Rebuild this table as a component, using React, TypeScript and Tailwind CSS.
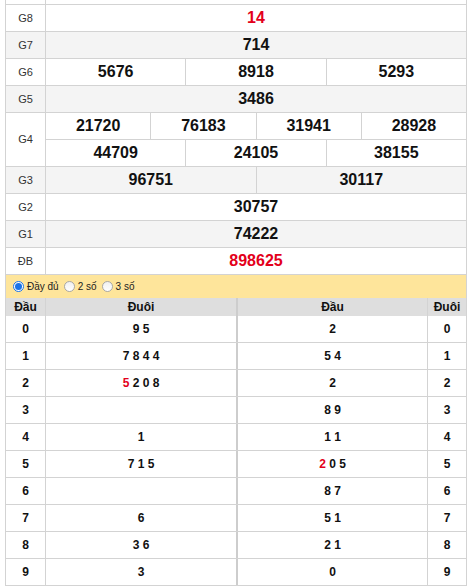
import React from 'react';

type Prize = {
  label: string;
  lines: string[][];
  red?: boolean;
};

const prizes: Prize[] = [
  { label: 'G8', lines: [['14']], red: true },
  { label: 'G7', lines: [['714']] },
  { label: 'G6', lines: [['5676', '8918', '5293']] },
  { label: 'G5', lines: [['3486']] },
  {
    label: 'G4',
    lines: [
      ['21720', '76183', '31941', '28928'],
      ['44709', '24105', '38155'],
    ],
  },
  { label: 'G3', lines: [['96751', '30117']] },
  { label: 'G2', lines: [['30757']] },
  { label: 'G1', lines: [['74222']] },
  { label: 'ĐB', lines: [['898625']], red: true },
];

// đầu - đuôi, chữ số đỏ đánh dấu bằng *
const loto: { n: string; tail: string; head: string }[] = [
  { n: '0', tail: '9 5', head: '2' },
  { n: '1', tail: '7 8 4 4', head: '5 4' },
  { n: '2', tail: '*5 2 0 8', head: '2' },
  { n: '3', tail: '', head: '8 9' },
  { n: '4', tail: '1', head: '1 1' },
  { n: '5', tail: '7 1 5', head: '*2 0 5' },
  { n: '6', tail: '', head: '8 7' },
  { n: '7', tail: '6', head: '5 1' },
  { n: '8', tail: '3 6', head: '2 1' },
  { n: '9', tail: '3', head: '0' },
];

const Digits = ({ text }: { text: string }) => {
  if (text.startsWith('*')) {
    const [first, ...rest] = text.slice(1).split(' ');
    return (
      <span>
        <span className="text-[#e3001b]">{first}</span>
        {rest.length > 0 && ' ' + rest.join(' ')}
      </span>
    );
  }
  return <span>{text}</span>;
};

const Radio = ({ checked, label }: { checked?: boolean; label: string }) => (
  <label className="flex items-center gap-[3px]">
    {checked ? (
      <span className="flex h-[11px] w-[11px] items-center justify-center rounded-full border border-[#1a73e8] bg-white">
        <span className="h-[7px] w-[7px] rounded-full bg-[#1a73e8]" />
      </span>
    ) : (
      <span className="h-[11px] w-[11px] rounded-full border border-[#a8a8a8] bg-gradient-to-b from-[#f0f0f0] to-white" />
    )}
    <span>{label}</span>
  </label>
);

const App = () => {
  return (
    <div
      className="h-[587px] w-[473px] overflow-hidden bg-white text-[#222]"
      style={{ fontFamily: '"Liberation Sans", Arial, sans-serif' }}
    >
      <div className="ml-[5px] w-[462px] border-x border-[#d3d3d3]">
        {/* phần trên bị cắt */}
        <div className="flex h-[5px] border-b border-[#d3d3d3]">
          <div className="w-[40px] border-r border-[#d3d3d3]" />
          <div className="flex-1" />
        </div>

        {prizes.map((p, i) => (
          <div
            key={p.label}
            className={`flex border-b border-[#d3d3d3] ${i % 2 === 1 ? 'bg-[#f4f4f4]' : 'bg-white'}`}
          >
            <div className="flex w-[40px] items-center justify-center border-r border-[#d3d3d3] text-[11px] text-[#333]">
              {p.label}
            </div>
            <div className="flex flex-1 flex-col">
              {p.lines.map((line, li) => (
                <div
                  key={li}
                  className={`flex h-[26px] ${li < p.lines.length - 1 ? 'h-[27px] border-b border-[#d3d3d3]' : ''}`}
                >
                  {line.map((num, ni) => (
                    <div
                      key={ni}
                      className={`flex flex-1 items-center justify-center text-[16px] font-bold ${
                        ni < line.length - 1 ? 'border-r border-[#d3d3d3]' : ''
                      } ${p.red ? 'text-[#e3001b]' : 'text-[#111]'}`}
                    >
                      {num}
                    </div>
                  ))}
                </div>
              ))}
            </div>
          </div>
        ))}

        <div className="flex h-[23px] items-center gap-[5px] bg-[#fee59b] pl-[7px] text-[10px] text-[#222]">
          <Radio checked label="Đầy đủ" />
          <Radio label="2 số" />
          <Radio label="3 số" />
        </div>

        <div className="flex h-[18px] bg-[#dedede] text-[12px] font-bold text-[#111]">
          <div className="flex w-[40px] items-center justify-center border-r border-[#d3d3d3]">Đầu</div>
          <div className="flex w-[192px] items-center justify-center border-r-2 border-[#cdcdcd]">Đuôi</div>
          <div className="flex w-[190px] items-center justify-center border-r border-[#d3d3d3]">Đầu</div>
          <div className="flex flex-1 items-center justify-center">Đuôi</div>
        </div>

        {loto.map((r) => (
          <div
            key={r.n}
            className="flex h-[27px] border-b border-[#d3d3d3] text-[12px] font-bold text-[#111]"
          >
            <div className="flex w-[40px] items-center justify-center border-r border-[#d3d3d3]">{r.n}</div>
            <div className="flex w-[192px] items-center justify-center border-r-2 border-[#cdcdcd]">
              <Digits text={r.tail} />
            </div>
            <div className="flex w-[190px] items-center justify-center border-r border-[#d3d3d3]">
              <Digits text={r.head} />
            </div>
            <div className="flex flex-1 items-center justify-center">{r.n}</div>
          </div>
        ))}
      </div>
    </div>
  );
};

export default App;
